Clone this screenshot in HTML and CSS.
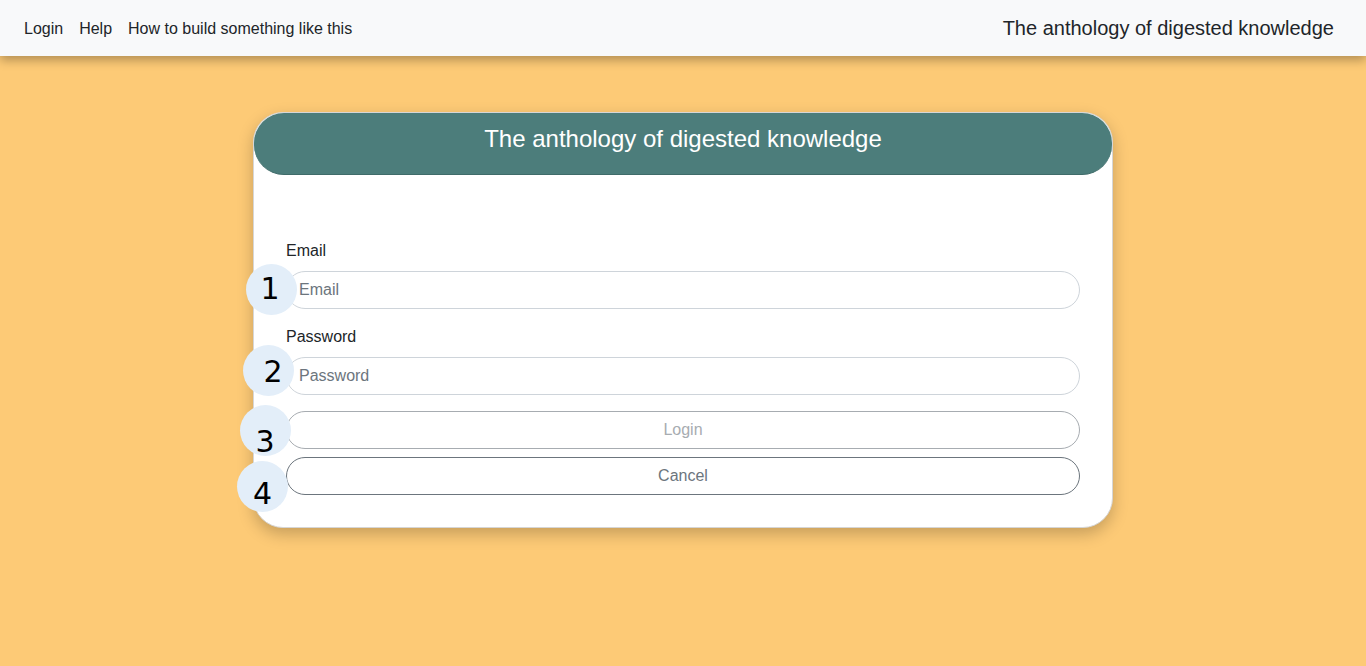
FILE: index.html
```html
<!DOCTYPE html>
<html lang="en">
<head>
<meta charset="utf-8">
<title>Login</title>
<link rel="stylesheet" href="styles.css">
</head>
<body>
<nav class="navbar">
  <div class="nav-links">
    <a class="nav-link" href="#">Login</a>
    <a class="nav-link" href="#">Help</a>
    <a class="nav-link" href="#">How to build something like this</a>
  </div>
  <div class="brand">The anthology of digested knowledge</div>
</nav>
<main class="main">
  <section class="card">
    <header class="card-header">The anthology of digested knowledge</header>
    <form class="card-body">
      <label class="label" for="email">Email</label>
      <div class="field">
        <input class="input" id="email" type="email" placeholder="Email">
        <span class="badge b1"><span class="num">1</span></span>
      </div>
      <label class="label" for="pw">Password</label>
      <div class="field">
        <input class="input" id="pw" type="password" placeholder="Password">
        <span class="badge b2"><span class="num">2</span></span>
      </div>
      <div class="field btn-field">
        <button class="btn btn-login" type="button" disabled>Login</button>
        <span class="badge b3"><span class="num">3</span></span>
      </div>
      <div class="field">
        <button class="btn btn-cancel" type="button">Cancel</button>
        <span class="badge b4"><span class="num">4</span></span>
      </div>
    </form>
  </section>
</main>
</body>
</html>
```

FILE: styles.css
```css
* { box-sizing: border-box; }
html, body { margin: 0; padding: 0; }
body {
  font-family: "Liberation Sans", Arial, sans-serif;
  font-size: 16px;
  line-height: 1.5;
  color: #212529;
  background: #fdca76;
  min-height: 666px;
}
.navbar {
  height: 56px;
  background: #f8f9fa;
  display: flex;
  align-items: center;
  justify-content: space-between;
  padding: 0 32px 0 16px;
  box-shadow: 0 4px 10px rgba(0,0,0,0.3);
  position: relative;
  z-index: 2;
}
.nav-links { display: flex; margin-top: 2px; }
.nav-link {
  color: #212529;
  text-decoration: none;
  padding: 8px 8px;
  font-size: 16px;
}
.brand {
  font-size: 20px;
  color: #212529;
}
.main {
  display: flex;
  justify-content: center;
  padding-top: 56px;
}
.card {
  width: 860px;
  background: #fff;
  border: 1px solid #d6d6d6;
  border-radius: 30px;
  box-shadow: 0 6px 16px rgba(0,0,0,0.22);
}
.card-header {
  height: 62px;
  background: #4c7d7b;
  color: #fff;
  font-size: 24px;
  line-height: 1.2;
  text-align: center;
  padding-top: 12px;
  border-radius: 30px;
  border-bottom: 1px solid #3f6b69;
}
.card-body {
  padding: 64px 32px 32px;
  display: flex;
  flex-direction: column;
}
.label {
  display: block;
  margin-bottom: 8px;
  line-height: 24px;
}
.field {
  position: relative;
  margin-bottom: 16px;
}
.field:last-child { margin-bottom: 0; }
.btn-field { margin-bottom: 8px; }
.input {
  display: block;
  width: 100%;
  height: 38px;
  padding: 6px 12px;
  font-family: inherit;
  font-size: 16px;
  color: #212529;
  background: #fff;
  border: 1px solid #ced4da;
  border-radius: 19px;
  outline: none;
}
.input::placeholder { color: #6c757d; }
.btn {
  display: block;
  width: 100%;
  height: 38px;
  font-family: inherit;
  font-size: 16px;
  background: #fff;
  border-radius: 19px;
  text-align: center;
}
.btn-login {
  color: #a7acb1;
  border: 1px solid #a7acb1;
}
.btn-cancel {
  color: #6c757d;
  border: 1px solid #6c757d;
}
.badge {
  position: absolute;
  width: 51px;
  height: 51px;
  border-radius: 50%;
  background: #e3eef9;
  font-family: "DejaVu Sans", sans-serif;
  font-size: 30px;
  line-height: 1;
  color: #000;
  display: flex;
  align-items: center;
  justify-content: center;
}
.b1 { left: -40px; top: -7px; }
.b1 .num { margin-left: -3px; margin-top: -2px; }
.b2 { left: -43px; top: -12px; }
.b2 .num { margin-left: 9px; margin-top: 2px; }
.b3 { left: -46px; top: -6px; }
.b3 .num { margin-left: -1px; margin-top: 22px; }
.b4 { left: -49px; top: 4px; }
.b4 .num { margin-top: 14px; }
```
